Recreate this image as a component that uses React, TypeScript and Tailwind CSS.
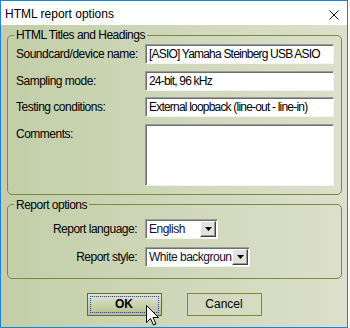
import React from 'react';

const font = { fontFamily: '"Liberation Sans", Arial, sans-serif' };

const DropArrow = () => (
    <div className="absolute right-[1px] top-[1px] w-[16px] h-[16px] bg-[#e4e2dc] border border-t-white border-l-white border-r-[#404040] border-b-[#404040] shadow-[inset_-1px_-1px_0_#9a9a9a] flex items-center justify-center">
        <svg width="7" height="4" viewBox="0 0 7 4">
            <path d="M0 0h7L3.5 4z" fill="#000" />
        </svg>
    </div>
);

const Field = ({ value, h = 'h-[20px]' }: { value?: string; h?: string }) => (
    <div className={`w-[189px] ${h} bg-white border border-t-[#9c9c9c] border-l-[#9c9c9c] border-r-[#f4f4f4] border-b-[#f4f4f4] shadow-[inset_1px_1px_0_#6e6e6e] pl-[3px] flex items-center`}>
        {value && <span className="text-[12px] tracking-[-0.8px] text-black whitespace-nowrap">{value}</span>}
    </div>
);

const Select = ({ value, w }: { value: string; w: string }) => (
    <div className={`${w} h-[20px] relative bg-white border border-t-[#9c9c9c] border-l-[#9c9c9c] border-r-[#f4f4f4] border-b-[#f4f4f4] shadow-[inset_1px_1px_0_#6e6e6e] pl-[3px] flex items-center`}>
        <span className="whitespace-nowrap text-[12px] tracking-[-0.5px] text-[#101030]">{value}</span>
        <DropArrow />
    </div>
);

export default function App() {
    return (
        <div className="w-[350px] h-[328px] bg-white relative" style={font}>
            <div className="w-[348px] h-[328px] border border-[#1883d7] flex flex-col">
                {/* Title bar */}
                <div className="h-[24px] bg-white flex items-center justify-between pl-[4px] pr-[8px] shrink-0">
                    <span className="text-[12px] text-black leading-none mt-[2px]">HTML report options</span>
                    <svg width="10" height="10" viewBox="0 0 10 10" className="mt-[3px]">
                        <path d="M0.5 0.5l9 9M9.5 0.5l-9 9" stroke="#111" strokeWidth="1" />
                    </svg>
                </div>

                <div className="flex-1 bg-linear-to-r from-[#c2cea8] to-[#dde0cc] pl-[6px] pt-[3px] flex flex-col text-[12px] leading-[14px] tracking-[-0.5px] text-black">
                    {/* HTML Titles and Headings */}
                    <fieldset className="w-[335px] border border-[#7d8a3c] rounded-[5px] pl-[8px] pr-[7px] pt-[2px] pb-[8px]">
                        <legend className="-ml-[2px] px-[2px] leading-[14px]">HTML Titles and Headings</legend>
                        <div className="flex flex-col gap-[6.5px]">
                            <div className="flex items-center">
                                <span className="w-[129px]">Soundcard/device name:</span>
                                <Field value="[ASIO] Yamaha Steinberg USB ASIO" />
                            </div>
                            <div className="flex items-center">
                                <span className="w-[129px]">Sampling mode:</span>
                                <Field value="24-bit, 96 kHz" />
                            </div>
                            <div className="flex items-center">
                                <span className="w-[129px]">Testing conditions:</span>
                                <Field value="External loopback (line-out - line-in)" />
                            </div>
                            <div className="flex items-start">
                                <span className="w-[129px] pt-[3px]">Comments:</span>
                                <Field h="h-[62px]" />
                            </div>
                        </div>
                    </fieldset>

                    {/* Report options */}
                    <fieldset className="w-[335px] mt-[3px] border border-[#7d8a3c] rounded-[5px] pl-[8px] pr-[7px] pt-[7px] pb-[11px]">
                        <legend className="-ml-[2px] px-[2px] leading-[14px]">Report options</legend>
                        <div className="flex flex-col gap-[8px]">
                            <div className="flex items-center">
                                <span className="w-[129px] pr-[8px] text-right">Report language:</span>
                                <Select value="English" w="w-[73px]" />
                            </div>
                            <div className="flex items-center">
                                <span className="w-[129px] pr-[8px] text-right">Report style:</span>
                                <Select value="White background" w="w-[105px]" />
                            </div>
                        </div>
                    </fieldset>

                    {/* Buttons */}
                    <div className="mt-[14px] pr-[6px] flex justify-center gap-[25px] tracking-normal">
                        <button className="w-[75px] h-[23px] border border-[#5f6e2c] bg-linear-to-b from-[#e2e6cf] to-[#b4c08a] p-[2px]">
                            <div className="w-full h-full border border-dotted border-[#2040d0] flex items-center justify-center font-bold text-[12px] text-black">
                                OK
                            </div>
                        </button>
                        <button className="w-[75px] h-[23px] border border-[#7d8a3c] flex items-center justify-center text-[12px] text-black">
                            Cancel
                        </button>
                    </div>
                </div>
            </div>

            {/* Mouse cursor */}
            <svg className="absolute left-[146px] top-[305px]" width="13" height="21" viewBox="0 0 13 21">
                <path d="M0.5 0.5V17.5L4.5 13.5L7.5 20L10 19L7 12.5H12.5Z" fill="#fff" stroke="#000" strokeWidth="1" strokeLinejoin="miter" />
            </svg>
        </div>
    );
}
